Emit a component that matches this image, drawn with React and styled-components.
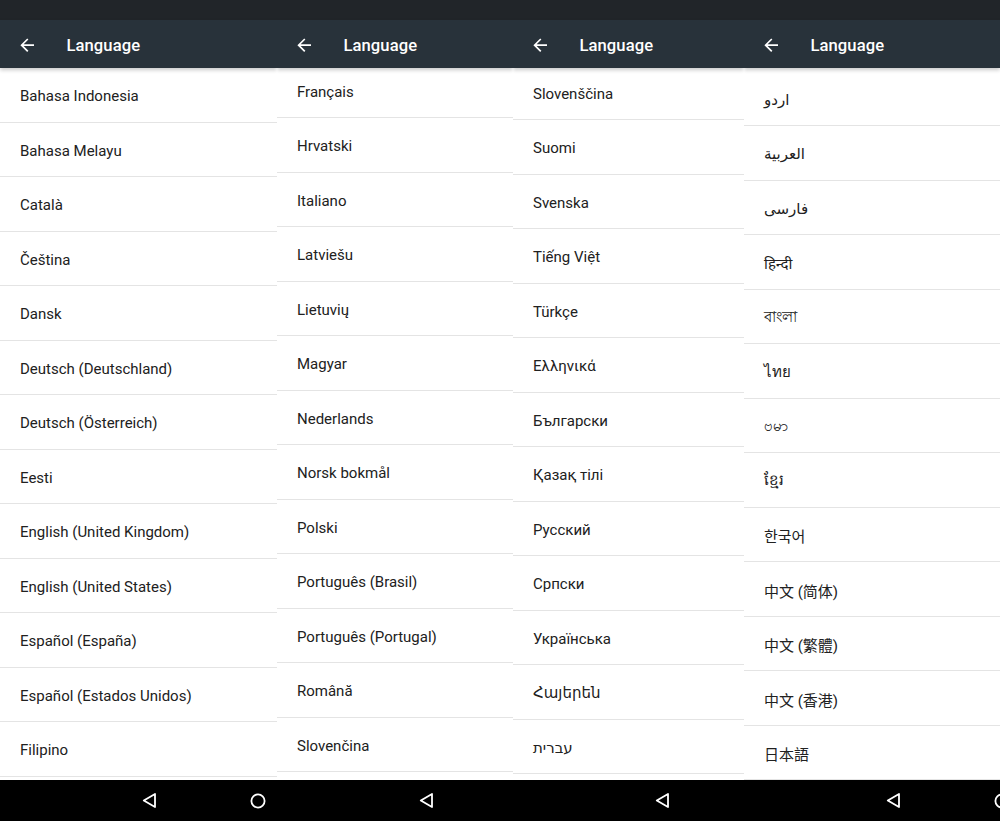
import React from 'react'
import styled, { createGlobalStyle } from 'styled-components'

const GlobalStyle = createGlobalStyle`
  html, body {
    margin: 0;
    padding: 0;
    background: #ffffff;
  }
  body {
    font-family: Roboto, "Noto Sans", "DejaVu Sans", sans-serif;
  }
`

const Screen = styled.div`
  display: flex;
  width: 1000px;
  height: 821px;
  overflow: hidden;
  background: #ffffff;
`

const Panel = styled.div`
  display: flex;
  flex-direction: column;
  flex: 0 0 ${props => props.width}px;
  width: ${props => props.width}px;
  height: 100%;
  overflow: hidden;
`

const StatusBar = styled.div`
  flex: 0 0 20px;
  background: #212529;
`

const Toolbar = styled.div`
  position: relative;
  z-index: 2;
  box-sizing: border-box;
  flex: 0 0 48px;
  display: flex;
  align-items: center;
  padding: 2px 0 0 17px;
  background: #28323a;
  box-shadow: 0 2px 4px rgba(0, 0, 0, 0.22);
`

const BackIcon = styled.svg`
  flex-shrink: 0;
  width: 20.4px;
  height: 20.4px;
  fill: #ffffff;
`

const Title = styled.div`
  margin-left: 29px;
  color: #ffffff;
  font-family: Roboto, sans-serif;
  font-weight: 500;
  font-size: 16.6px;
  letter-spacing: 0.1px;
  white-space: nowrap;
`

const List = styled.div`
  flex: 1 1 auto;
  overflow: hidden;
  display: flex;
  flex-direction: column;
`

const Items = styled.div`
  margin-top: ${props => props.offset}px;
  display: flex;
  flex-direction: column;
`

const Item = styled.div`
  box-sizing: border-box;
  flex: 0 0 54.5px;
  height: 54.5px;
  display: flex;
  align-items: center;
  padding: 3px 0 0 20px;
  border-bottom: 1px solid #e4e4e4;
  color: #212121;
  font-family: Roboto, "DejaVu Sans", "Noto Sans", "Noto Sans CJK SC",
    sans-serif;
  font-size: 15px;
  white-space: nowrap;
`

const NavBar = styled.div`
  flex: 0 0 41px;
  display: flex;
  align-items: center;
  padding-left: 142px;
  gap: 93px;
  background: #000000;
`

const NavIcon = styled.svg`
  flex-shrink: 0;
  width: ${props => props.size}px;
  height: ${props => props.size}px;
  fill: none;
  stroke: #ffffff;
  stroke-width: 1.8;
  stroke-linejoin: round;
`

const panels = [
  {
    width: 277,
    offset: 0,
    items: [
      'Bahasa Indonesia',
      'Bahasa Melayu',
      'Català',
      'Čeština',
      'Dansk',
      'Deutsch (Deutschland)',
      'Deutsch (Österreich)',
      'Eesti',
      'English (United Kingdom)',
      'English (United States)',
      'Español (España)',
      'Español (Estados Unidos)',
      'Filipino',
    ],
  },
  {
    width: 236,
    offset: -4.5,
    items: [
      'Français',
      'Hrvatski',
      'Italiano',
      'Latviešu',
      'Lietuvių',
      'Magyar',
      'Nederlands',
      'Norsk bokmål',
      'Polski',
      'Português (Brasil)',
      'Português (Portugal)',
      'Română',
      'Slovenčina',
    ],
  },
  {
    width: 231,
    offset: -2.5,
    items: [
      'Slovenščina',
      'Suomi',
      'Svenska',
      'Tiếng Việt',
      'Türkçe',
      'Ελληνικά',
      'Български',
      'Қазақ тілі',
      'Русский',
      'Српски',
      'Українська',
      'Հայերեն',
      'עברית',
    ],
  },
  {
    width: 256,
    offset: 3.5,
    items: [
      'اردو',
      'العربية',
      'فارسی',
      'हिन्दी',
      'বাংলা',
      'ไทย',
      'ဗမာ',
      'ខ្មែរ',
      '한국어',
      '中文 (简体)',
      '中文 (繁體)',
      '中文 (香港)',
      '日本語',
    ],
  },
]

const ArrowBack = () => (
  <BackIcon viewBox="0 0 24 24">
    <path d="M20 11H7.830l5.59-5.59L12 4l-8 8 8 8 1.41-1.41L7.83 13H20v-2z" />
  </BackIcon>
)

const Navigation = () => (
  <NavBar>
    <NavIcon size={15} viewBox="0 0 15 15">
      <path d="M13 1 L1.8 7.5 L13 14 Z" />
    </NavIcon>
    <NavIcon size={16} viewBox="0 0 16 16">
      <circle cx="8" cy="8" r="6.6" />
    </NavIcon>
  </NavBar>
)

const LanguagePanel = ({ width, offset, items }) => (
  <Panel width={width}>
    <StatusBar />
    <Toolbar>
      <ArrowBack />
      <Title>Language</Title>
    </Toolbar>
    <List>
      <Items offset={offset}>
        {items.map(name => (
          <Item key={name}>
            <span>{name}</span>
          </Item>
        ))}
      </Items>
    </List>
    <Navigation />
  </Panel>
)

export default function App() {
  return (
    <>
      <GlobalStyle />
      <Screen>
        {panels.map((panel, i) => (
          <LanguagePanel key={i} {...panel} />
        ))}
      </Screen>
    </>
  )
}
